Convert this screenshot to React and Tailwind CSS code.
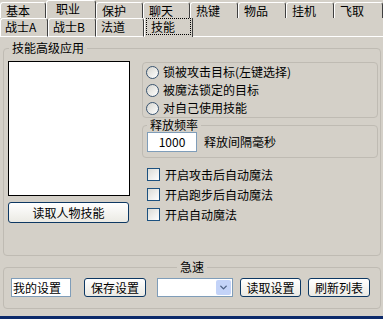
import React from "react";
import { ChevronDown } from "lucide-react";

const topTabs = [
  { label: "基本", cls: "w-[46px] h-[16px] pl-[5px]" },
  { label: "职业", cls: "w-[50px] h-[18px] pl-[9px]" },
  { label: "保护", cls: "w-[47px] h-[16px] pl-[5px]" },
  { label: "聊天", cls: "w-[47px] h-[16px] pl-[5px]" },
  { label: "热键", cls: "w-[48px] h-[16px] pl-[5px]" },
  { label: "物品", cls: "w-[48px] h-[16px] pl-[5px]" },
  { label: "挂机", cls: "w-[48px] h-[16px] pl-[5px]" },
  { label: "飞取", cls: "w-[49px] h-[16px] pl-[5px]" },
];

const subTabs = ["战士A", "战士B", "法道"];

const radios = ["锁被攻击目标(左键选择)", "被魔法锁定的目标", "对自己使用技能"];
const checks = ["开启攻击后自动魔法", "开启跑步后自动魔法", "开启自动魔法"];

const Radio = ({ label }) => (
  <div className="flex items-center h-[18px] pl-[3px]">
    <span className="w-[13px] h-[13px] rounded-full border border-[#3a5470] bg-linear-to-br from-[#d6d5cf] to-white" />
    <span className="ml-[4px]">{label}</span>
  </div>
);

const Check = ({ label }) => (
  <div className="flex items-center h-[13px] pl-[5px]">
    <span className="w-[13px] h-[13px] border border-[#1c5180] bg-linear-to-br from-[#dcdcd7] to-white" />
    <span className="ml-[5px]">{label}</span>
  </div>
);

const XpButton = ({ children, cls }) => (
  <button
    className={`${cls} h-[19px] border border-[#0d3863] rounded-[3px] bg-linear-to-b from-white to-[#ebeae4] text-[12px] leading-[17px] text-center`}
  >
    {children}
  </button>
);

export default function App() {
  return (
    <div className="w-[383px] h-[319px] overflow-hidden bg-[#d4d0c8] text-black text-[12px] leading-[14px] font-['SimSun','Noto_Sans_CJK_SC',sans-serif] flex flex-col">
      {/* tab rows */}
      <div className="flex items-end h-[18px]">
        {topTabs.map((t) => (
          <div
            key={t.label}
            className={`${t.cls} border-t border-l border-white border-r border-r-[#404040] rounded-t-[3px] pt-[1px] leading-[14px]`}
          >
            {t.label}
          </div>
        ))}
      </div>
      <div className="flex h-[19px]">
        {subTabs.map((t) => (
          <div
            key={t}
            className="w-[48px] h-full border-t border-l border-b border-white border-r border-r-[#404040] rounded-t-[3px] pl-[4px] leading-[16px]"
          >
            {t}
          </div>
        ))}
        <div className="w-[49px] h-full border-l border-white border-r border-r-[#404040] px-[1px]">
          <div className="h-[17px] border border-dotted border-black pl-[4px] leading-[15px]">
            技能
          </div>
        </div>
        <div className="flex-1 h-full border-b border-white" />
      </div>

      {/* skill group */}
      <fieldset className="mt-[4px] ml-[3px] w-[378px] h-[215px] border border-[#bfbbb3] rounded-[4px]">
        <legend className="ml-[5px] px-[3px] leading-[14px]">技能高级应用</legend>
        <div className="flex gap-[12px] pl-[4px] pt-[6px]">
          <div className="flex flex-col">
            <div className="w-[122px] h-[135px] bg-white border border-black" />
            <XpButton cls="mt-[6px] w-[121px] !h-[21px] !leading-[19px]">读取人物技能</XpButton>
          </div>
          <div className="flex flex-col w-[236px] mt-[1px]">
            <div className="h-[56px] border border-[#bfbbb3] rounded-[4px] flex flex-col">
              {radios.map((r) => (
                <Radio key={r} label={r} />
              ))}
            </div>
            <fieldset className="h-[40px] border border-[#bfbbb3] rounded-[4px]">
              <legend className="ml-[4px] px-[3px] leading-[14px]">释放频率</legend>
              <div className="flex items-center pl-[4px]">
                <div className="w-[50px] h-[20px] bg-white border border-[#7f9db9] text-center leading-[18px]">
                  1000
                </div>
                <span className="ml-[7px]">释放间隔毫秒</span>
              </div>
            </fieldset>
            <div className="flex flex-col gap-[7px] mt-[10px]">
              {checks.map((c) => (
                <Check key={c} label={c} />
              ))}
            </div>
          </div>
        </div>
      </fieldset>

      {/* speed group */}
      <fieldset className="mt-[4px] ml-[3px] w-[378px] h-[49px] border border-[#bfbbb3] rounded-[4px]">
        <legend className="mx-auto px-[3px] leading-[14px]">急速</legend>
        <div className="flex items-center pl-[7px] pt-[4px]">
          <div className="w-[60px] h-[19px] bg-white border border-[#7f9db9] leading-[17px] pl-[1px]">
            我的设置
          </div>
          <XpButton cls="ml-[13px] w-[62px]">保存设置</XpButton>
          <div className="ml-[11px] w-[76px] h-[19px] bg-white border border-[#7f9db9] flex justify-end p-[1px]">
            <div className="w-[15px] h-full rounded-[2px] bg-[#c3d3f8] flex items-center justify-center text-[#4d6185]">
              <ChevronDown size={11} strokeWidth={3} />
            </div>
          </div>
          <XpButton cls="ml-[7px] w-[61px]">读取设置</XpButton>
          <XpButton cls="ml-[7px] w-[62px]">刷新列表</XpButton>
        </div>
      </fieldset>

      <div className="mt-[7px] h-[3px] bg-[#0c2a6b]" />
    </div>
  );
}
